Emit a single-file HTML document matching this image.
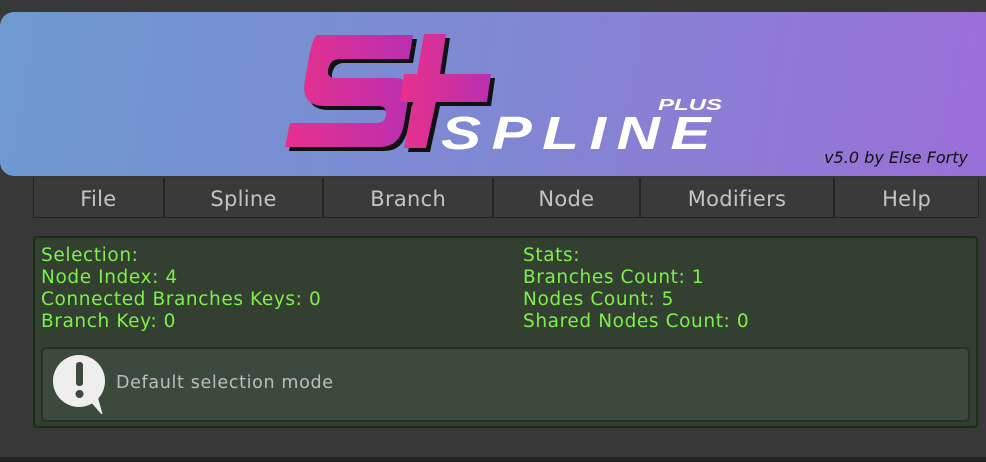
<!DOCTYPE html>
<html><head><style>
body{margin:0;width:986px;height:462px;background:#383838;position:relative;overflow:hidden;font-family:"DejaVu Sans","Liberation Sans",sans-serif}
.banner{position:absolute;left:0;top:12px;width:986px;height:164px;border-radius:14px 0 0 14px;background:linear-gradient(100deg,#6e9ad0 0%,#7f88d2 50%,#9b6fd8 100%)}
.ver{position:absolute;right:18px;top:136px;font-style:italic;font-size:16px;color:#111}
.tb{position:absolute;left:33px;top:178px;width:944px;height:39px;border:1px solid #222;border-top:none;display:flex}
.tb div{color:#c4c4c4;font-size:21px;letter-spacing:0.3px;text-align:center;line-height:42px;border-right:2px solid #242424;background:#3a3a3a}
.tb div:last-child{border-right:none}
.box{position:absolute;left:33px;top:236px;width:941px;height:188px;background:#333f30;border:2px solid #183012;border-radius:4px}
.t{position:absolute;color:#7df04a;font-size:18.5px;letter-spacing:0.6px;line-height:22px}
.inner{position:absolute;left:6px;top:109px;width:925px;height:71px;background:#3c4a3b;border:2px solid #2a2e2a;border-radius:5px}
.msg{position:absolute;left:73px;top:24px;color:#bdbdbd;font-size:17.5px;letter-spacing:0.65px}
</style></head><body>
<div class="banner">
<svg width="986" height="164" style="position:absolute;left:0;top:0">
<defs><linearGradient id="g" x1="0" x2="1"><stop offset="0" stop-color="#e8308c"/><stop offset="1" stop-color="#b82fb0"/></linearGradient></defs>
<g transform="translate(4,4)" fill="#111">
<path d="M318 23 H413 L409 47 H340 Q330 47 328 58 Q327 66 336 66 H395 Q412 66 408 88 L404 112 Q400 135 380 135 H285 L290 111 H377 Q385 111 386 103 Q387 94 378 94 H325 Q300 94 305 68 L309 45 Q313 23 318 23Z"/>
<path d="M424 22 H446 L440 62 H491 L487 90 H436 L426 136 H404 L413 90 H400 L404 62 H417Z"/>
</g>
<g fill="url(#g)">
<path d="M318 23 H413 L409 47 H340 Q330 47 328 58 Q327 66 336 66 H395 Q412 66 408 88 L404 112 Q400 135 380 135 H285 L290 111 H377 Q385 111 386 103 Q387 94 378 94 H325 Q300 94 305 68 L309 45 Q313 23 318 23Z"/>
<path d="M424 22 H446 L440 62 H491 L487 90 H436 L426 136 H404 L413 90 H400 L404 62 H417Z"/>
</g>
<text x="441" y="137" fill="#fff" font-family="Liberation Sans" font-size="46" font-weight="bold" font-style="italic" letter-spacing="8" textLength="280" lengthAdjust="spacingAndGlyphs">SPLINE</text>
<text x="658" y="98" fill="#fff" font-family="Liberation Sans" font-size="16" font-weight="bold" font-style="italic" textLength="64" lengthAdjust="spacingAndGlyphs">PLUS</text>
</svg>
<div class="ver">v5.0 by Else Forty</div>
</div>
<div class="tb">
<div style="width:129px">File</div><div style="width:158px">Spline</div><div style="width:168px">Branch</div><div style="width:145px">Node</div><div style="width:193px">Modifiers</div><div style="width:143px">Help</div>
</div>
<div class="box">
<div class="t" style="left:6px;top:7px">Selection:<br>Node Index: 4<br>Connected Branches Keys: 0<br>Branch Key: 0</div>
<div class="t" style="left:488px;top:7px">Stats:<br>Branches Count: 1<br>Nodes Count: 5<br>Shared Nodes Count: 0</div>
<div class="inner">
<svg width="60" height="60" style="position:absolute;left:10px;top:5px"><circle cx="26" cy="27" r="26" fill="#eee"/><path d="M36 46 L50 62 L44 40Z" fill="#eee"/><rect x="23" y="8" width="7" height="24" rx="3" fill="#3c4a3b"/><circle cx="26.5" cy="40" r="4" fill="#3c4a3b"/></svg>
<div class="msg">Default selection mode</div>
</div>
</div>
<div style="position:absolute;left:0;top:457px;width:986px;height:5px;background:#222"></div>
</body></html>
